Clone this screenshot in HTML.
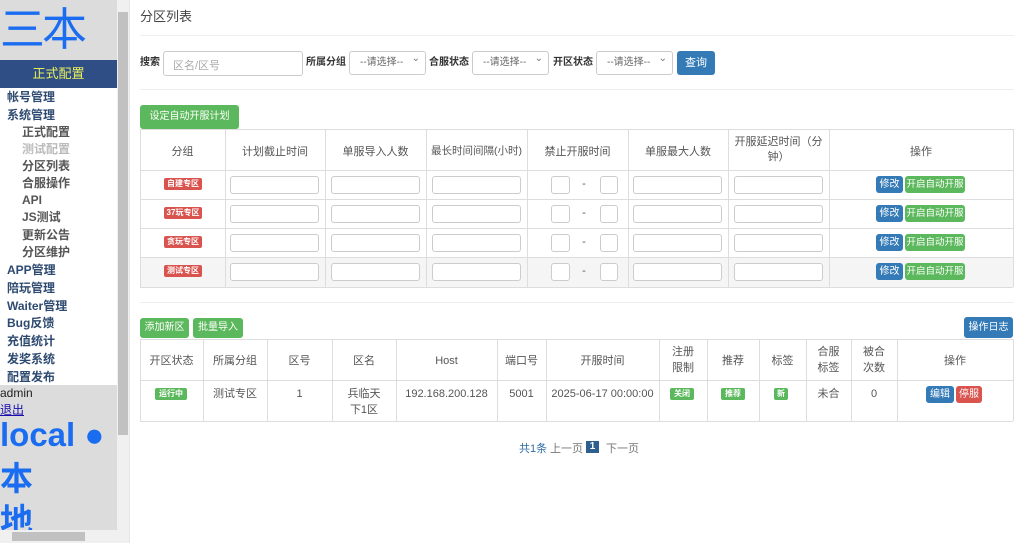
<!DOCTYPE html>
<html><head><meta charset="utf-8"><style>
*{box-sizing:border-box;margin:0;padding:0}
body{width:1024px;height:543px;overflow:hidden;background:#fff;font-family:"Liberation Sans","Noto Sans CJK SC",sans-serif;color:#333;position:relative;font-size:12px}
.a{position:absolute}
#side{left:0;top:0;width:117px;height:530px;background:#dcdcdc;overflow:hidden}
.logo{left:0;top:4px;font-size:45px;color:#1a6cf0;line-height:52px;letter-spacing:-3px}
.act{left:0;top:60px;width:117px;height:28px;background:#2e4e85;color:#e8ee5a;font-size:13px;text-align:center;line-height:28px}
.menu{left:0;top:88px;width:117px;height:297px;background:#fff}
.mi{position:absolute;font-size:12px;line-height:14px;font-weight:bold;color:#2e4a70;white-space:nowrap}
.sub{color:#555}
.input{position:absolute;border:1px solid #ccc;border-radius:3px;background:#fff}
.btn{position:absolute;color:#fff;border-radius:3px;text-align:center;font-size:11px;white-space:nowrap}
.g{background:#5cb85c}.b{background:#337ab7}.r{background:#d9534f}
.lab{position:absolute;color:#fff;font-size:8px;font-weight:bold;border-radius:2px;text-align:center;line-height:12px;height:12px;white-space:nowrap}
.vl{position:absolute;width:1px;background:#ddd}
.hl{position:absolute;height:1px;background:#ddd}
.t{position:absolute;text-align:center;font-size:11px;color:#555}
.sel{position:absolute;border:1px solid #ccc;border-radius:3px;background:#fff;height:24px;font-size:10px;color:#666;line-height:22px;padding-left:10px;white-space:nowrap}
.sel:after{content:"⌄";position:absolute;right:5px;top:-4px;color:#777}
.fl{position:absolute;font-weight:bold;font-size:10px;color:#333;white-space:nowrap;line-height:12px}
</style></head><body>
<div id="side" class="a">
 <div class="a logo">三本</div>
 <div class="a act">正式配置</div>
 <div class="a menu">
  <div class="mi" style="left:7px;top:2px">帐号管理</div>
  <div class="mi" style="left:7px;top:20px">系统管理</div>
  <div class="mi sub" style="left:22px;top:37px">正式配置</div>
  <div class="mi" style="left:22px;top:54px;color:#bbb">测试配置</div>
  <div class="mi sub" style="left:22px;top:71px">分区列表</div>
  <div class="mi sub" style="left:22px;top:88px">合服操作</div>
  <div class="mi sub" style="left:22px;top:105px">API</div>
  <div class="mi sub" style="left:22px;top:122px">JS测试</div>
  <div class="mi sub" style="left:22px;top:140px">更新公告</div>
  <div class="mi sub" style="left:22px;top:157px">分区维护</div>
  <div class="mi" style="left:7px;top:175px">APP管理</div>
  <div class="mi" style="left:7px;top:193px">陪玩管理</div>
  <div class="mi" style="left:7px;top:211px">Waiter管理</div>
  <div class="mi" style="left:7px;top:228px">Bug反馈</div>
  <div class="mi" style="left:7px;top:246px">充值统计</div>
  <div class="mi" style="left:7px;top:264px">发奖系统</div>
  <div class="mi" style="left:7px;top:282px">配置发布</div>
 </div>
 <div class="a" style="left:0;top:386px;font-size:12px;color:#222">admin</div>
 <div class="a" style="left:0;top:401px;font-size:12px;color:#1a0dab;text-decoration:underline">退出</div>
 <div class="a" style="left:0;top:414px;font-size:33px;font-weight:bold;color:#1a6cf0;line-height:42px;white-space:nowrap">local ●</div>
 <div class="a" style="left:0;top:458px;font-size:33px;font-weight:bold;color:#1a6cf0;line-height:42px">本</div>
 <div class="a" style="left:0;top:500px;font-size:33px;font-weight:bold;color:#1a6cf0;line-height:42px">地</div>
</div>
<div class="a" style="left:117px;top:0;width:12px;height:530px;background:#f0f0f0"></div>
<div class="a" style="left:118px;top:12px;width:10px;height:423px;background:#c1c1c1"></div>
<div class="a" style="left:0;top:530px;width:129px;height:13px;background:#f0f0f0"></div>
<div class="a" style="left:12px;top:532px;width:73px;height:9px;background:#c1c1c1"></div>
<div class="a" style="left:129px;top:0;width:1px;height:543px;background:#e5e5e5"></div>

<div class="a" style="left:140px;top:6px;font-size:13px;color:#444">分区列表</div>
<div class="hl" style="left:140px;top:35px;width:874px;background:#eee"></div>
<div class="fl" style="left:140px;top:57px">搜索</div>
<div class="input" style="left:163px;top:51px;width:140px;height:25px;font-size:11px;color:#aaa;padding:5px 9px">区名/区号</div>
<div class="fl" style="left:306px;top:57px">所属分组</div>
<div class="sel" style="left:349px;top:51px;width:77px">--请选择--</div>
<div class="fl" style="left:429px;top:57px">合服状态</div>
<div class="sel" style="left:472px;top:51px;width:77px">--请选择--</div>
<div class="fl" style="left:553px;top:57px">开区状态</div>
<div class="sel" style="left:596px;top:51px;width:77px">--请选择--</div>
<div class="btn b" style="left:677px;top:51px;width:38px;height:24px;line-height:24px;font-size:11px">查询</div>
<div class="hl" style="left:140px;top:89px;width:874px;background:#eee"></div>

<div class="btn g" style="left:140px;top:105px;width:99px;height:24px;line-height:24px;font-size:10px">设定自动开服计划</div>
<div class="a" style="left:140px;top:257px;width:873px;height:30px;background:#f5f5f5"></div>
<div class="hl" style="left:140px;top:129px;width:873px"></div>
<div class="hl" style="left:140px;top:170px;width:873px"></div>
<div class="hl" style="left:140px;top:199px;width:873px"></div>
<div class="hl" style="left:140px;top:228px;width:873px"></div>
<div class="hl" style="left:140px;top:257px;width:873px"></div>
<div class="hl" style="left:140px;top:287px;width:873px"></div>
<div class="vl" style="left:140px;top:129px;height:158px"></div>
<div class="vl" style="left:225px;top:129px;height:158px"></div>
<div class="vl" style="left:325px;top:129px;height:158px"></div>
<div class="vl" style="left:426px;top:129px;height:158px"></div>
<div class="vl" style="left:527px;top:129px;height:158px"></div>
<div class="vl" style="left:628px;top:129px;height:158px"></div>
<div class="vl" style="left:728px;top:129px;height:158px"></div>
<div class="vl" style="left:829px;top:129px;height:158px"></div>
<div class="vl" style="left:1013px;top:129px;height:158px"></div>
<div class="t" style="left:140px;top:143px;width:85px">分组</div>
<div class="t" style="left:225px;top:143px;width:100px">计划截止时间</div>
<div class="t" style="left:325px;top:143px;width:101px">单服导入人数</div>
<div class="t" style="left:426px;top:143px;width:101px;font-size:10.5px">最长时间间隔(小时)</div>
<div class="t" style="left:527px;top:143px;width:101px">禁止开服时间</div>
<div class="t" style="left:628px;top:143px;width:100px">单服最大人数</div>
<div class="t" style="left:728px;top:135px;width:101px;line-height:15px;padding:0 4px">开服延迟时间（分钟）</div>
<div class="t" style="left:829px;top:143px;width:184px">操作</div>

<div id="rows"></div>
<script>
var labs=["自建专区","37玩专区","贪玩专区","测试专区"],ys=[170,199,228,257],h="";
for(var i=0;i<4;i++){var y=ys[i];
h+='<div class="lab r" style="left:164px;top:'+(y+8)+'px;width:38px">'+labs[i]+'</div>';
[230,331,432,633,734].forEach(function(x){h+='<div class="input" style="left:'+x+'px;top:'+(y+6)+'px;width:89px;height:18px"></div>'});
h+='<div class="input" style="left:551px;top:'+(y+6)+'px;width:19px;height:18px"></div>';
h+='<div class="t" style="left:574px;top:'+(y+8)+'px;width:20px">-</div>';
h+='<div class="input" style="left:600px;top:'+(y+6)+'px;width:18px;height:18px"></div>';
h+='<div class="btn b" style="left:876px;top:'+(y+6)+'px;width:27px;height:17px;line-height:17px;font-size:10px">修改</div>';
h+='<div class="btn g" style="left:905px;top:'+(y+6)+'px;width:60px;height:17px;line-height:17px;font-size:9.5px">开启自动开服</div>';}
document.getElementById('rows').outerHTML=h;
</script>
<div class="hl" style="left:140px;top:302px;width:874px;background:#eee"></div>

<div class="btn g" style="left:140px;top:318px;width:49px;height:20px;line-height:20px;font-size:10px">添加新区</div>
<div class="btn g" style="left:193px;top:318px;width:50px;height:20px;line-height:20px;font-size:10px">批量导入</div>
<div class="btn b" style="left:964px;top:317px;width:49px;height:21px;line-height:21px;font-size:10px">操作日志</div>
<div class="hl" style="left:140px;top:339px;width:873px"></div>
<div class="hl" style="left:140px;top:380px;width:873px"></div>
<div class="hl" style="left:140px;top:421px;width:873px"></div>
<script>
var xs=[140,203,267,332,396,497,546,659,707,759,806,851,897,1013],s="";
xs.forEach(function(x){s+='<div class="vl" style="left:'+x+'px;top:339px;height:82px"></div>'});
var hd=["开区状态","所属分组","区号","区名","Host","端口号","开服时间","注册限制","推荐","标签","合服标签","被合次数","操作"];
var rw=["","测试专区","1","兵临天下1区","192.168.200.128","5001","2025-06-17 00:00:00","","","","未合","0",""];
for(var i=0;i<13;i++){var w=xs[i+1]-xs[i];
 var one=(hd[i].length<=4&&w>55)||i==4;
 s+='<div class="t" style="left:'+xs[i]+'px;top:'+(w<55&&hd[i].length>3?344:353)+'px;width:'+w+'px;line-height:16px;padding:0 8px">'+hd[i]+'</div>';
 s+='<div class="t" style="left:'+xs[i]+'px;top:386px;width:'+w+'px;line-height:16px;padding:0 '+(i==3?12:2)+'px;white-space:'+(i==3?'normal':'nowrap')+'">'+rw[i]+'</div>';}
document.write(s);
</script>
<div class="lab g" style="left:155px;top:388px;width:32px">运行中</div>
<div class="lab g" style="left:670px;top:388px;width:24px">关闭</div>
<div class="lab g" style="left:721px;top:388px;width:24px">推荐</div>
<div class="lab g" style="left:774px;top:388px;width:14px">新</div>
<div class="btn b" style="left:926px;top:386px;width:28px;height:17px;line-height:17px;font-size:10px">编辑</div>
<div class="btn r" style="left:956px;top:386px;width:26px;height:17px;line-height:17px;font-size:10px">停服</div>

<div class="a" style="left:519px;top:440px;font-size:11px;color:#2e6da4">共1条</div>
<div class="a" style="left:550px;top:440px;font-size:11px;color:#777">上一页</div>
<div class="a" style="left:586px;top:441px;width:13px;height:12px;background:#2e5f8f;color:#fff;font-size:10px;font-weight:bold;text-align:center;line-height:12px">1</div>
<div class="a" style="left:606px;top:440px;font-size:11px;color:#777">下一页</div>
</body></html>
